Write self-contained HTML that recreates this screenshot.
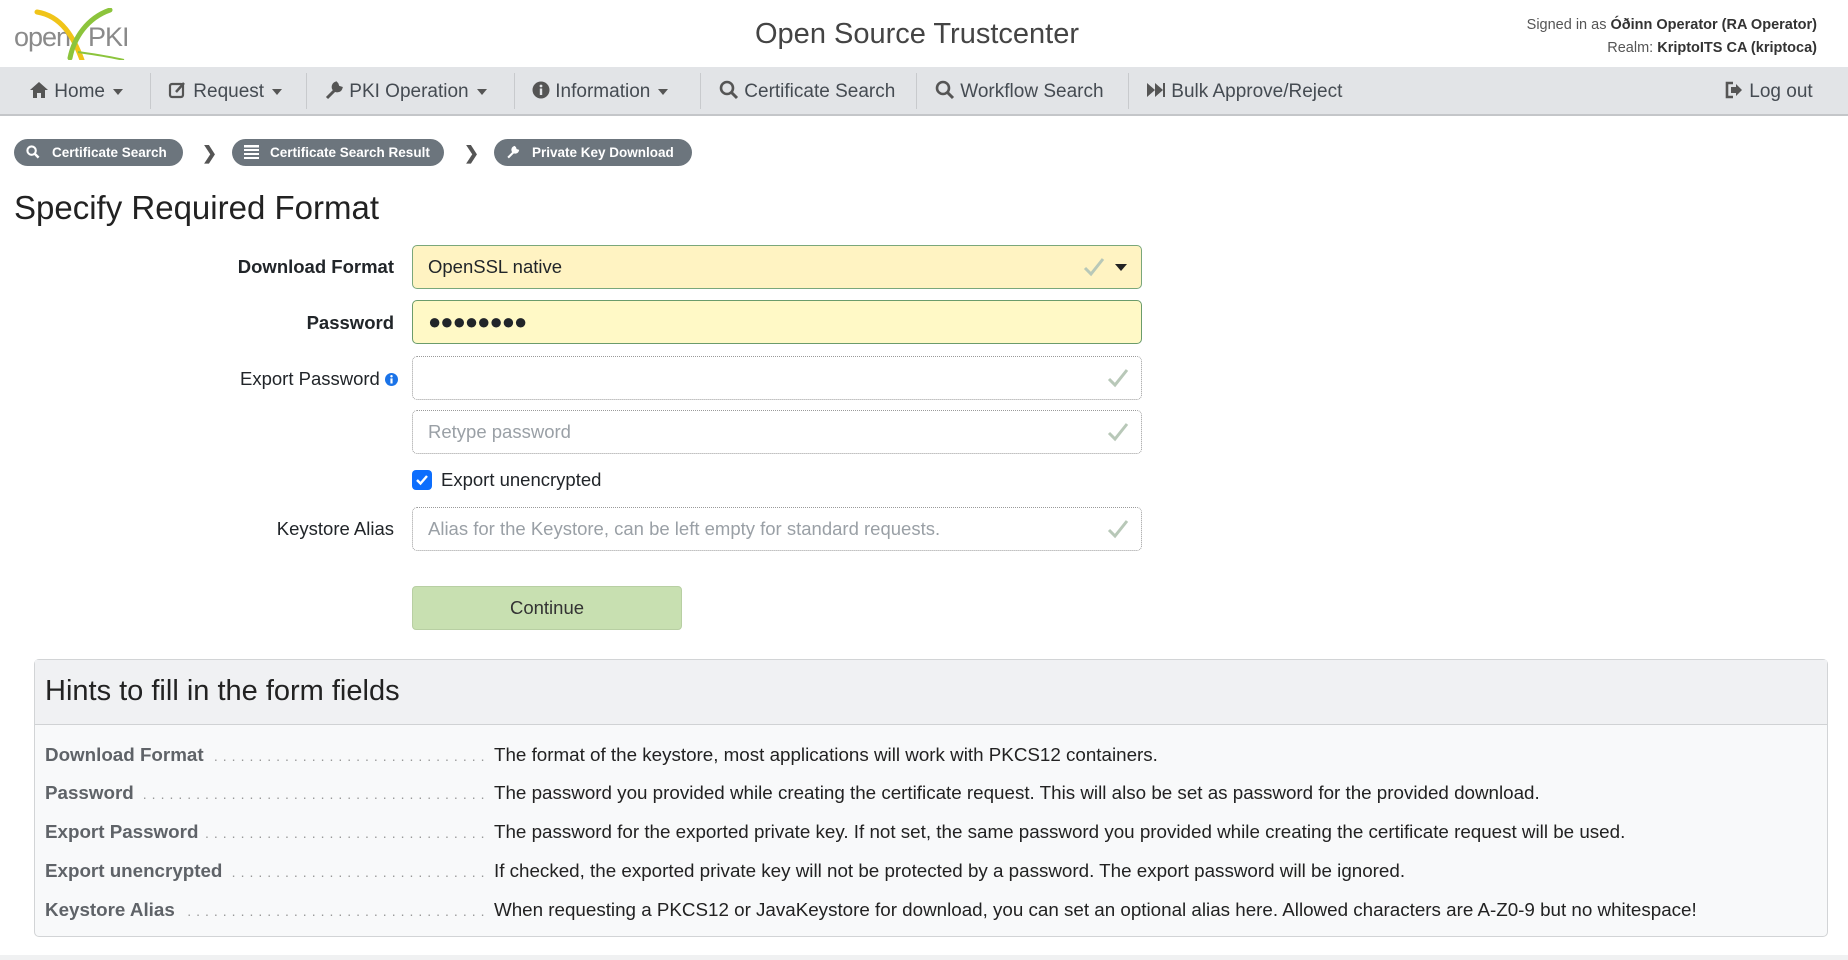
<!DOCTYPE html>
<html><head><meta charset="utf-8">
<style>
*{box-sizing:border-box;margin:0;padding:0}
body{width:1848px;height:960px;overflow:hidden;background:#fff;font-family:"Liberation Sans",sans-serif;color:#212529;position:relative}
.abs{position:absolute}
.title{left:0;width:1834px;text-align:center;top:18px;font-size:29px;color:#444}
.user{right:31px;top:14px;text-align:right;font-size:14.5px;color:#555;line-height:23px}
.user b{color:#333}
.nav{left:0;top:67px;width:1848px;height:49px;background:#e2e4e7;border-bottom:2px solid #c4c6c9}
.ni{position:absolute;top:0;height:47px;line-height:49px;font-size:19px;color:#454b52;white-space:nowrap}
.sep{position:absolute;top:6px;height:36px;width:1px;background:#c8cacd}
.caret{display:inline-block;border-left:5px solid transparent;border-right:5px solid transparent;border-top:6px solid #555;vertical-align:middle;margin-left:8px}
.pill{position:absolute;top:139px;height:27px;border-radius:14px;background:#6c757d;color:#fff;font-weight:bold;font-size:13.5px;line-height:27px;padding-left:38px;white-space:nowrap}
.pill svg{position:absolute;left:12px;top:6px}
.chev{position:absolute;top:143px;font-size:18px;color:#555;font-weight:bold}
h2{position:absolute;left:14px;top:189px;font-size:33px;font-weight:normal;color:#222}
.lbl{position:absolute;right:1454px;font-size:18.5px;text-align:right;white-space:nowrap}
.inp{position:absolute;left:412px;width:730px;height:44px;border-radius:5px;font-size:18.5px;line-height:42px;padding-left:15px}
.dot{border:1px dotted #9a9a9a}
.ph{color:#9aa0a6}
.chk{position:absolute;right:12px;top:11px}
.btn{position:absolute;left:412px;top:586px;width:270px;height:44px;background:#c8e0b1;border:1px solid #b8cfa3;border-radius:4px;text-align:center;line-height:42px;font-size:18.5px;color:#333}
.hints{position:absolute;left:34px;top:659px;width:1794px;height:278px;border:1px solid #d2d4d6;border-radius:5px;background:#f8f9fa}
.hh{height:65px;background:#f0f1f3;border-bottom:1px solid #d0d2d4;font-size:29px;line-height:62px;padding-left:10px;color:#222}
.row{position:absolute;left:10px;width:1760px;font-size:18.8px;white-space:nowrap}
.row b{position:absolute;left:0;color:#5f6368;background:#f8f9fa;padding-right:8px}
.row .dots{position:absolute;left:0;width:440px;overflow:hidden;color:#999;letter-spacing:5px;font-size:14px;top:4px}
.row span.d{position:absolute;left:449px;color:#222}
</style></head><body>
<svg class="abs" style="left:12px;top:8px" width="118" height="52" viewBox="0 0 118 52">
<text x="2" y="38" font-family="Liberation Sans" font-size="27" fill="#8a8a8a" letter-spacing="-1">open</text>
<text x="76" y="38" font-family="Liberation Sans" font-size="27" fill="#8a8a8a" letter-spacing="-1">PKI</text>
<path d="M25 4 C 50 8, 62 30, 70 52" stroke="#f0c419" stroke-width="5" fill="none" stroke-linecap="round"/>
<path d="M98 2 C 75 10, 62 30, 58 50" stroke="#8cc43c" stroke-width="5" fill="none" stroke-linecap="round"/>
<path d="M66 44 C 80 46, 95 48, 112 52" stroke="#8cc43c" stroke-width="2" fill="none"/>
</svg>
<div class="abs title">Open Source Trustcenter</div>
<div class="abs user">Signed in as <b>Óðinn Operator (RA Operator)</b><br>Realm: <b>KriptoITS CA (kriptoca)</b></div>
<div class="abs nav">
<div class="ni" style="left:29px"><svg width="20" height="18" viewBox="0 0 20 18" style="vertical-align:-2px"><path d="M10 1 L1 9 H4 V17 H8 V12 H12 V17 H16 V9 H19Z" fill="#555"/></svg> Home<span class="caret"></span></div>
<div class="sep" style="left:150px"></div>
<div class="ni" style="left:168px"><svg width="20" height="18" viewBox="0 0 20 18" style="vertical-align:-2px"><rect x="2" y="3" width="13" height="13" rx="2" fill="none" stroke="#555" stroke-width="2.2"/><path d="M8 11 L16 2" stroke="#555" stroke-width="2.5"/></svg> Request<span class="caret"></span></div>
<div class="sep" style="left:306px"></div>
<div class="ni" style="left:324px"><svg width="20" height="20" viewBox="0 0 20 20" style="vertical-align:-3px"><path d="M3 18 L11 10 M12 3 a4 4 0 1 0 5 5 l-3 -1 -1 -3z" stroke="#555" stroke-width="3" fill="#555"/></svg> PKI Operation<span class="caret"></span></div>
<div class="sep" style="left:514px"></div>
<div class="ni" style="left:532px"><svg width="18" height="18" viewBox="0 0 18 18" style="vertical-align:-2px"><circle cx="9" cy="9" r="8.5" fill="#555"/><rect x="7.8" y="7.5" width="2.4" height="6.5" fill="#e2e4e7"/><circle cx="9" cy="5" r="1.4" fill="#e2e4e7"/></svg> Information<span class="caret"></span></div>
<div class="sep" style="left:700px"></div>
<div class="ni" style="left:719px"><svg width="20" height="20" viewBox="0 0 20 20" style="vertical-align:-3px"><circle cx="8" cy="8" r="6" fill="none" stroke="#555" stroke-width="2.6"/><path d="M12.5 12.5 L18 18" stroke="#555" stroke-width="3"/></svg> Certificate Search</div>
<div class="sep" style="left:916px"></div>
<div class="ni" style="left:935px"><svg width="20" height="20" viewBox="0 0 20 20" style="vertical-align:-3px"><circle cx="8" cy="8" r="6" fill="none" stroke="#555" stroke-width="2.6"/><path d="M12.5 12.5 L18 18" stroke="#555" stroke-width="3"/></svg> Workflow Search</div>
<div class="sep" style="left:1128px"></div>
<div class="ni" style="left:1146px"><svg width="20" height="16" viewBox="0 0 20 16" style="vertical-align:-1px"><path d="M1 1 L9 8 L1 15Z M9 1 L17 8 L9 15Z" fill="#555"/><rect x="17" y="1" width="2" height="14" fill="#555"/></svg> Bulk Approve/Reject</div>
<div class="ni" style="left:1724px"><svg width="20" height="18" viewBox="0 0 20 18" style="vertical-align:-2px"><path d="M9 2 H3 V16 H9" fill="none" stroke="#555" stroke-width="2.6"/><path d="M7 6 H12 V3 L18 9 L12 15 V12 H7Z" fill="#555"/></svg> Log out</div>
</div>
<div class="pill" style="left:14px;width:169px"><svg width="14" height="14" viewBox="0 0 20 20"><circle cx="8" cy="8" r="6" fill="none" stroke="#fff" stroke-width="3"/><path d="M12.5 12.5 L18 18" stroke="#fff" stroke-width="3.5"/></svg>Certificate Search</div>
<div class="chev" style="left:202px">&#x276F;</div>
<div class="pill" style="left:232px;width:212px;padding-left:38px"><svg width="15" height="14" viewBox="0 0 15 14"><rect x="0" y="0" width="15" height="2.5" fill="#fff"/><rect x="0" y="4" width="15" height="2" fill="#fff"/><rect x="0" y="8" width="15" height="2" fill="#fff"/><rect x="0" y="12" width="15" height="2" fill="#fff"/></svg>Certificate Search Result</div>
<div class="chev" style="left:464px">&#x276F;</div>
<div class="pill" style="left:494px;width:198px"><svg width="14" height="14" viewBox="0 0 20 20"><path d="M3 18 L11 10 M12 3 a4 4 0 1 0 5 5 l-3 -1 -1 -3z" stroke="#fff" stroke-width="3" fill="#fff"/></svg>Private Key Download</div>
<h2>Specify Required Format</h2>
<div class="lbl" style="top:256px;font-weight:bold">Download Format</div>
<div class="inp" style="top:245px;background:#fff3c2;border:1px solid #7aa77a">OpenSSL native
<svg class="chk" style="right:36px" width="22" height="20" viewBox="0 0 22 20"><path d="M2 11 L8 17 L20 2" fill="none" stroke="#b8c8b8" stroke-width="3"/></svg>
<svg class="abs" style="right:14px;top:18px" width="12" height="7"><path d="M0 0 H12 L6 7Z" fill="#222"/></svg></div>
<div class="lbl" style="top:312px;font-weight:bold">Password</div>
<div class="inp" style="top:300px;background:#fff9c6;border:1px solid #6b9c6b;font-size:22px;letter-spacing:-1px">●●●●●●●●</div>
<div class="lbl" style="top:368px;right:1450px">Export Password <svg width="13" height="13" viewBox="0 0 18 18" style="vertical-align:-1px"><circle cx="9" cy="9" r="9" fill="#1a73e8"/><rect x="7.5" y="7.5" width="3" height="7" fill="#fff"/><circle cx="9" cy="4.5" r="1.7" fill="#fff"/></svg></div>
<div class="inp dot" style="top:356px"><svg class="chk" width="22" height="20" viewBox="0 0 22 20"><path d="M2 11 L8 17 L20 2" fill="none" stroke="#b8c8b8" stroke-width="3"/></svg></div>
<div class="inp dot ph" style="top:410px">Retype password<svg class="chk" width="22" height="20" viewBox="0 0 22 20"><path d="M2 11 L8 17 L20 2" fill="none" stroke="#b8c8b8" stroke-width="3"/></svg></div>
<svg class="abs" style="left:412px;top:470px" width="20" height="20" viewBox="0 0 20 20"><rect width="20" height="20" rx="4" fill="#0d6efd"/><path d="M5 10 L8.5 13.5 L15 6" fill="none" stroke="#fff" stroke-width="2.4"/></svg>
<div class="abs" style="left:441px;top:469px;font-size:18.5px">Export unencrypted</div>
<div class="lbl" style="top:518px">Keystore Alias</div>
<div class="inp dot ph" style="top:507px">Alias for the Keystore, can be left empty for standard requests.<svg class="chk" width="22" height="20" viewBox="0 0 22 20"><path d="M2 11 L8 17 L20 2" fill="none" stroke="#b8c8b8" stroke-width="3"/></svg></div>
<div class="btn">Continue</div>
<div class="hints">
<div class="hh">Hints to fill in the form fields</div>
<div class="row" style="top:84px"><div class="dots">............................................................................................</div><b>Download Format</b><span class="d">The format of the keystore, most applications will work with PKCS12 containers.</span></div>
<div class="row" style="top:122px"><div class="dots">............................................................................................</div><b>Password</b><span class="d">The password you provided while creating the certificate request. This will also be set as password for the provided download.</span></div>
<div class="row" style="top:161px"><div class="dots">............................................................................................</div><b>Export Password</b><span class="d">The password for the exported private key. If not set, the same password you provided while creating the certificate request will be used.</span></div>
<div class="row" style="top:200px"><div class="dots">............................................................................................</div><b>Export unencrypted</b><span class="d">If checked, the exported private key will not be protected by a password. The export password will be ignored.</span></div>
<div class="row" style="top:239px"><div class="dots">............................................................................................</div><b>Keystore Alias</b><span class="d">When requesting a PKCS12 or JavaKeystore for download, you can set an optional alias here. Allowed characters are A-Z0-9 but no whitespace!</span></div>
</div>
<div class="abs" style="left:0;top:955px;width:1848px;height:5px;background:#f0f1f2"></div>
</body></html>
